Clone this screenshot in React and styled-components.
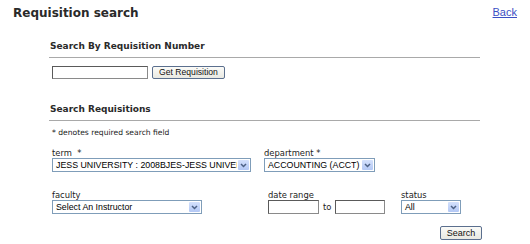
import React from 'react'
import styled, { createGlobalStyle } from 'styled-components'

const GlobalStyle = createGlobalStyle`
    body {
        margin: 0;
        background: #fff;
        font-family: "DejaVu Sans", Verdana, sans-serif;
        color: #222;
    }
`

const Arrow = () => (
    <svg width="7" height="5" viewBox="0 0 7 5">
        <path d="M1 1 L3.5 3.5 L6 1" fill="none" stroke="#4d6185" strokeWidth="1.5" />
    </svg>
)

const Select = ({ width, value }) => (
    <SelectBox $w={width}>
        <SelectValue>{value}</SelectValue>
        <ArrowBox><Arrow /></ArrowBox>
    </SelectBox>
)

const App = () => {
    return (
        <Page>
            <GlobalStyle />
            <TopBar>
                <Title>Requisition search</Title>
                <BackLink href="#">Back</BackLink>
            </TopBar>

            <Content>
                <SectionTitle>Search By Requisition Number</SectionTitle>
                <NumberRow>
                    <TextBox $w={96} />
                    <Button $w={73}>Get Requisition</Button>
                </NumberRow>

                <SectionTitle $top={25}>Search Requisitions</SectionTitle>
                <Note>* denotes required search field</Note>

                <FieldRow $top={11}>
                    <Field $w={212}>
                        <Label>term &nbsp;*</Label>
                        <Select width={199} value="JESS UNIVERSITY : 2008BJES-JESS UNIVERSITY" />
                    </Field>
                    <Field>
                        <Label>department *</Label>
                        <Select width={111} value="ACCOUNTING (ACCT)" />
                    </Field>
                </FieldRow>

                <FieldRow $top={18}>
                    <Field $w={216}>
                        <Label>faculty</Label>
                        <Select width={150} value="Select An Instructor" />
                    </Field>
                    <Field $w={133}>
                        <Label>date range</Label>
                        <DateRow>
                            <TextBox $w={51} $h={14} />
                            <To>to</To>
                            <TextBox $w={50} $h={14} />
                        </DateRow>
                    </Field>
                    <Field>
                        <Label>status</Label>
                        <Select width={60} value="All" />
                    </Field>
                </FieldRow>

                <SearchRow>
                    <Button $w={42} $h={14} $size={9}>Search</Button>
                </SearchRow>
            </Content>
        </Page>
    )
}

const Page = styled.div`
    width: 530px;
    height: 244px;
    overflow: hidden;
`

const TopBar = styled.div`
    display: flex;
    justify-content: space-between;
    align-items: flex-start;
    padding: 6px 13px 0 13px;
`

const Title = styled.h1`
    margin: 0;
    font-size: 12px;
    line-height: 14px;
    font-weight: bold;
    color: #2a2a2a;
`

const BackLink = styled.a`
    font-family: "Liberation Sans", Arial, sans-serif;
    font-size: 11px;
    line-height: 13px;
    color: #3b4fc4;
    text-decoration: underline;
`

const Content = styled.div`
    margin: 21px 0 0 49px;
    width: 431px;
`

const SectionTitle = styled.h2`
    margin: ${p => p.$top || 0}px 0 0 0;
    font-size: 9px;
    line-height: 11px;
    font-weight: bold;
    color: #2a2a2a;
    padding: 0 0 5px 1px;
    border-bottom: 1px solid #a9a9a9;
`

const NumberRow = styled.div`
    display: flex;
    gap: 4px;
    margin-top: 8px;
    padding-left: 3px;
`

const TextBox = styled.input`
    box-sizing: border-box;
    width: ${p => p.$w}px;
    height: ${p => p.$h || 13}px;
    margin: 0;
    padding: 0 2px;
    border: 1px solid #8a8a8a;
    border-top-color: #5a5a5a;
    border-left-color: #5a5a5a;
    background: #fff;
    font-size: 9px;
`

const Button = styled.button`
    box-sizing: border-box;
    width: ${p => p.$w}px;
    height: ${p => p.$h || 13}px;
    margin: 0;
    padding: 0;
    border: 1px solid #5b6f8e;
    border-radius: 2px;
    background: linear-gradient(#fbfbf8, #e9e9e2);
    font-family: "Liberation Sans", Arial, sans-serif;
    font-size: ${p => p.$size || 8.6}px;
    line-height: 1;
    color: #111;
`

const Note = styled.p`
    margin: 7px 0 0 0;
    padding-left: 3px;
    font-size: 7.6px;
    line-height: 9px;
    color: #222;
`

const FieldRow = styled.div`
    display: flex;
    align-items: flex-start;
    margin-top: ${p => p.$top}px;
    padding-left: 3px;
`

const Field = styled.div`
    display: flex;
    flex-direction: column;
    width: ${p => (p.$w ? `${p.$w}px` : 'auto')};
    flex: none;
`

const Label = styled.label`
    font-size: 8.4px;
    line-height: 10px;
    color: #222;
`

const SelectBox = styled.div`
    display: flex;
    align-items: stretch;
    box-sizing: border-box;
    width: ${p => p.$w}px;
    height: 14px;
    border: 1px solid #7f9db9;
    background: #fff;
    font-family: "Liberation Sans", Arial, sans-serif;
    font-size: 8.8px;
    color: #000;
`

const SelectValue = styled.span`
    flex: 1;
    overflow: hidden;
    white-space: nowrap;
    padding-left: 3px;
    line-height: 12px;
`

const ArrowBox = styled.span`
    flex: none;
    width: 11px;
    margin: 1px;
    display: flex;
    align-items: center;
    justify-content: center;
    background: linear-gradient(#d4e1fc, #b3c8f5);
    border-radius: 1px;
`

const DateRow = styled.div`
    display: flex;
    align-items: center;
    gap: 4px;
`

const To = styled.span`
    font-size: 8.4px;
    color: #222;
`

const SearchRow = styled.div`
    display: flex;
    justify-content: flex-end;
    margin: 12px -2px 0 0;
`

export default App
